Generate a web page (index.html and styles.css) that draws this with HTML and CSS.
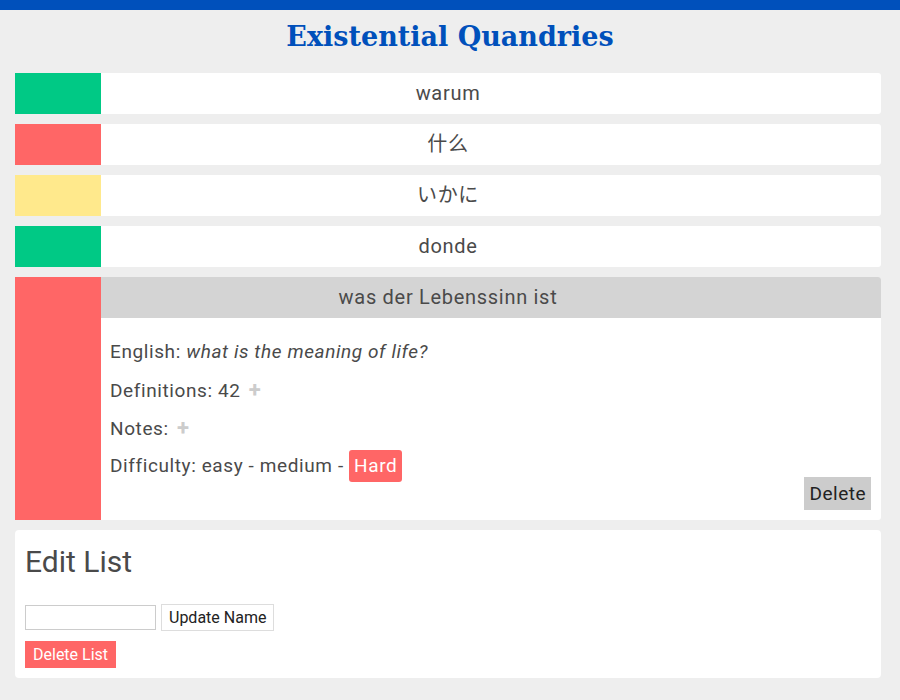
FILE: index.html
```html
<!DOCTYPE html>
<html>
<head>
<meta charset="utf-8">
<link rel="stylesheet" href="styles.css">
</head>
<body>
<div class="topbar"></div>
<h1 class="title">Existential Quandries</h1>
<div class="list">
  <div class="row">
    <div class="swatch green"></div>
    <div class="content"><div class="label">warum</div></div>
  </div>
  <div class="row">
    <div class="swatch red"></div>
    <div class="content"><div class="label">什么</div></div>
  </div>
  <div class="row">
    <div class="swatch yellow"></div>
    <div class="content"><div class="label">いかに</div></div>
  </div>
  <div class="row">
    <div class="swatch green"></div>
    <div class="content"><div class="label">donde</div></div>
  </div>
  <div class="row open">
    <div class="swatch red"></div>
    <div class="content">
      <div class="label active">was der Lebenssinn ist</div>
      <div class="details">
        <p class="line">English: <em>what is the meaning of life?</em></p>
        <p class="line">Definitions: 42 <span class="plus">+</span></p>
        <p class="line">Notes: <span class="plus">+</span></p>
        <p class="line">Difficulty: easy - medium - <span class="badge">Hard</span></p>
        <div class="actions"><button class="delete">Delete</button></div>
      </div>
    </div>
  </div>
</div>
<div class="edit">
  <h2 class="edit-title">Edit List</h2>
  <div class="edit-form">
    <input class="name-input" type="text">
    <button class="update">Update Name</button>
  </div>
  <button class="delete-list">Delete List</button>
</div>
</body>
</html>
```
FILE: styles.css
```css
html, body {
  margin: 0;
  padding: 0;
  background: #eeeeee;
  font-family: Roboto, "Noto Sans CJK SC", sans-serif;
  color: #4a4a4a;
}
.topbar {
  height: 10px;
  background: #0050bb;
}
.title {
  margin: 0;
  padding: 11px 0 0;
  height: 52px;
  box-sizing: border-box;
  text-align: center;
  font-family: "DejaVu Serif", serif;
  font-weight: bold;
  font-size: 27px;
  line-height: 32px;
  color: #0050bb;
}
.list {
  display: flex;
  flex-direction: column;
  gap: 10px;
  margin: 11px 19px 0 15px;
}
.row {
  display: flex;
  background: #fff;
  border-radius: 0 3px 3px 0;
}
.swatch {
  flex: 0 0 86px;
}
.green { background: #00c985; }
.red { background: #ff6666; }
.yellow { background: #ffe98c; }
.content {
  flex: 1;
  display: flex;
  flex-direction: column;
}
.label {
  height: 41px;
  line-height: 41px;
  text-align: center;
  padding-right: 86px;
  font-size: 20px;
  letter-spacing: 0.7px;
}
.label.active {
  background: #d4d4d4;
  border-radius: 0 3px 0 0;
}
.details {
  padding: 22px 10px 10px 9px;
}
.line {
  margin: 0 0 14px;
  font-size: 19px;
  letter-spacing: 0.6px;
  line-height: 24px;
  height: 24px;
}
.plus {
  color: #cccccc;
  font-size: 22px;
  font-weight: bold;
  line-height: 24px;
  margin-left: 3px;
}
.badge {
  display: inline-block;
  background: #ff6666;
  color: #fff;
  border-radius: 3px;
  padding: 4px 5px;
  margin: -4px 0;
  line-height: 24px;
}
.actions {
  display: flex;
  justify-content: flex-end;
  margin-top: -15px;
}
.delete {
  background: #cccccc;
  color: #222;
  border: none;
  font-family: Roboto, sans-serif;
  font-size: 19px;
  letter-spacing: 0.5px;
  height: 33px;
  padding: 0 5px;
}
.edit {
  margin: 10px 19px 0 15px;
  background: #fff;
  border-radius: 4px;
  padding: 10px 10px 10px;
}
.edit-title {
  margin: 0;
  font-family: Roboto, sans-serif;
  font-weight: normal;
  font-size: 30px;
  line-height: 44px;
  color: #4a4a4a;
}
.edit-form {
  display: flex;
  align-items: center;
  gap: 5px;
  margin-top: 20px;
}
.name-input {
  width: 127px;
  height: 21px;
  border: 1px solid #cccccc;
  padding: 1px 1px;
  margin: 0;
  box-sizing: content-box;
}
.update {
  background: #fff;
  border: 1px solid #dddddd;
  font-family: Roboto, sans-serif;
  font-size: 16px;
  color: #222;
  height: 27px;
  padding: 0 7px;
}
.delete-list {
  margin-top: 10px;
  background: #ff6666;
  color: #fff;
  border: none;
  font-family: Roboto, sans-serif;
  font-size: 16px;
  height: 27px;
  padding: 0 8px;
}
```
